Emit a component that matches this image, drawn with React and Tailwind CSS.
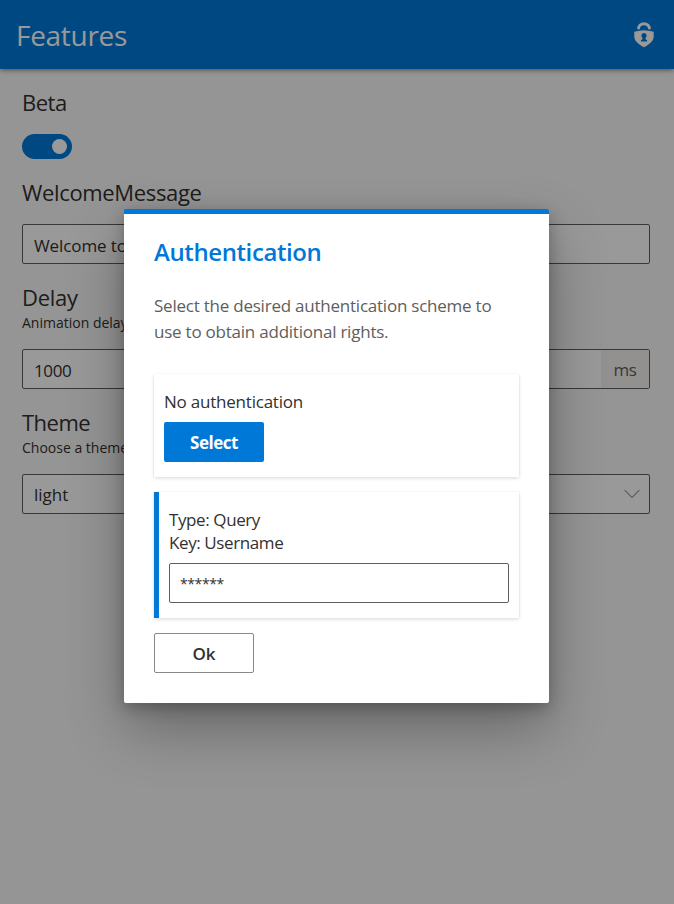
function SecureIcon() {
  return (
    <svg className="h-[26px] w-5" viewBox="0 0 20 26" fill="none">
      <path d="M4.500 7.200V6.700a5.500 5 0 0 1 11 0v.5" stroke="#fff" strokeWidth="2.900" />
      <path fill="#fff" fillRule="evenodd" d="M.3 9.800Q5 8.300 10 8.300t9.700 1.500v4.700c0 4.500-4.400 8-9.700 10.700C4.700 22.500.3 19 .3 14.500ZM10 11a2.700 2.700 0 0 0-1.600 4.800v1.400c0 .5-1.500.5-1.500 1.400v.9h6.200v-.9c0-.9-1.500-.9-1.500-1.400v-1.400A2.700 2.700 0 0 0 10 11Z" />
    </svg>
  );
}

function Label({ children }) {
  return <div className="text-[22px] leading-[30px]">{children}</div>;
}

function Field({ label, hint, children }) {
  return (
    <div>
      {label}
      {hint && <div className="mt-px -mb-px text-[14px] leading-5">{hint}</div>}
      {children}
    </div>
  );
}

function Page() {
  return (
    <div className="flex h-[904px] flex-col bg-[#faf9f8] text-[#323130]">
      <header className="z-10 flex h-[69px] shrink-0 items-center justify-between bg-[#0078d7] pr-5 pl-4 text-white shadow-[0_1px_5px_rgba(0,0,0,0.5)]">
        <h1 className="pt-px text-[28px] leading-9 tracking-[-0.3px]">Features</h1>
        <SecureIcon />
      </header>
      <main className="flex flex-col pt-[18px] pr-6 pl-[22px]">
        <Field label={<Label><span className="tracking-[-0.500px]">Beta</span></Label>}>
          <div className="mt-[17px] flex h-[25px] w-[50px] items-center justify-end rounded-full bg-[#0078d7] pr-[5px]">
            <div className="size-[15px] rounded-full bg-white" />
          </div>
        </Field>
        <div className="mt-[18px]">
          <Field label={<Label><span className="tracking-[-0.34px]">WelcomeMessage</span></Label>}>
            <div className="mt-[17px] flex h-10 items-center rounded-xs border border-[#605e5c] bg-white px-[11px] pt-[3px] text-[17px] tracking-[-0.1px]">Welcome to</div>
          </Field>
        </div>
        <div className="mt-[18px]">
          <Field label={<Label><span className="tracking-[-0.3px]">Delay</span></Label>} hint="Animation delay">
            <div className="mt-[17px] flex h-10 rounded-xs border border-[#605e5c] bg-white text-[17px]">
              <div className="flex flex-1 items-center pt-[3px] pl-[11px] tracking-[-0.400px]">1000</div>
              <div className="flex w-12 items-center justify-center bg-[#f3f2f1] pt-[2px] tracking-[-0.5px] text-[#605e5c]">ms</div>
            </div>
          </Field>
        </div>
        <div className="mt-[18px]">
          <Field label={<Label><span className="tracking-[-0.5px]">Theme</span></Label>} hint="Choose a theme">
            <div className="mt-[17px] flex h-10 items-center justify-between rounded-xs border border-[#605e5c] bg-white pr-[9px] pl-[11px] text-[17px]">
              <span className="pt-px">light</span>
              <svg className="h-[9px] w-4" viewBox="0 0 16 9" fill="none" stroke="#605e5c"><path d="m.7.2 7.300 7.300L15.300.2" /></svg>
            </div>
          </Field>
        </div>
      </main>
    </div>
  );
}

function Dialog() {
  return (
    <div className="h-[494px] w-[425px] rounded-xs border-t-[5px] border-[#0078d7] bg-white px-[30px] text-[#323130] shadow-[0_25.600px_57.600px_rgba(0,0,0,0.3),0_4.800px_14.400px_rgba(0,0,0,0.25)]">
      <h2 className="pt-[22px] text-[24px] leading-8 font-semibold tracking-[-0.4px] text-[#0078d7]">Authentication</h2>
      <p className="mt-[25px] text-[17px] leading-[26px] tracking-[-0.230px] whitespace-nowrap text-[#605e5c]">
        Select the desired authentication scheme to<br />use to obtain additional rights.
      </p>
      <section className="mt-[29px] h-[103px] bg-white px-[10px] pt-4 shadow-[0_1.600px_3.600px_rgba(0,0,0,0.132),0_0.300px_1.500px_rgba(0,0,0,0.15)]">
        <div className="text-[17px] leading-[23px] tracking-[-0.220px]">No authentication</div>
        <button className="mt-[9px] block h-10 w-[100px] rounded-xs bg-[#0078d7] pt-px text-[17px] font-bold tracking-[-0.500px] text-white">Select</button>
      </section>
      <section className="mt-[15px] h-[126px] border-l-[5px] border-[#0078d7] bg-white px-[10px] pt-4 shadow-[0_1.600px_3.600px_rgba(0,0,0,0.132),0_0.300px_1.500px_rgba(0,0,0,0.15)]">
        <div className="text-[17px] leading-[23px] tracking-[-0.400px]">Type: Query<br />Key: Username</div>
        <div className="mt-[9px] flex h-10 items-center rounded-xs border border-[#605e5c] px-[10px] text-[14px] tracking-[-0.400px]">******</div>
      </section>
      <button className="mt-[15px] block h-10 w-[100px] rounded-xs border border-[#8a8886] bg-white pt-px text-[17px] font-semibold">Ok</button>
    </div>
  );
}

export default function App() {
  return (
    <div className="relative h-[904px] w-[674px] overflow-hidden font-['Open_Sans','Noto_Sans',sans-serif]">
      <Page />
      <div className="absolute inset-0 z-20 flex items-start justify-center bg-black/40 pt-[209px] pr-px">
        <Dialog />
      </div>
    </div>
  );
}
